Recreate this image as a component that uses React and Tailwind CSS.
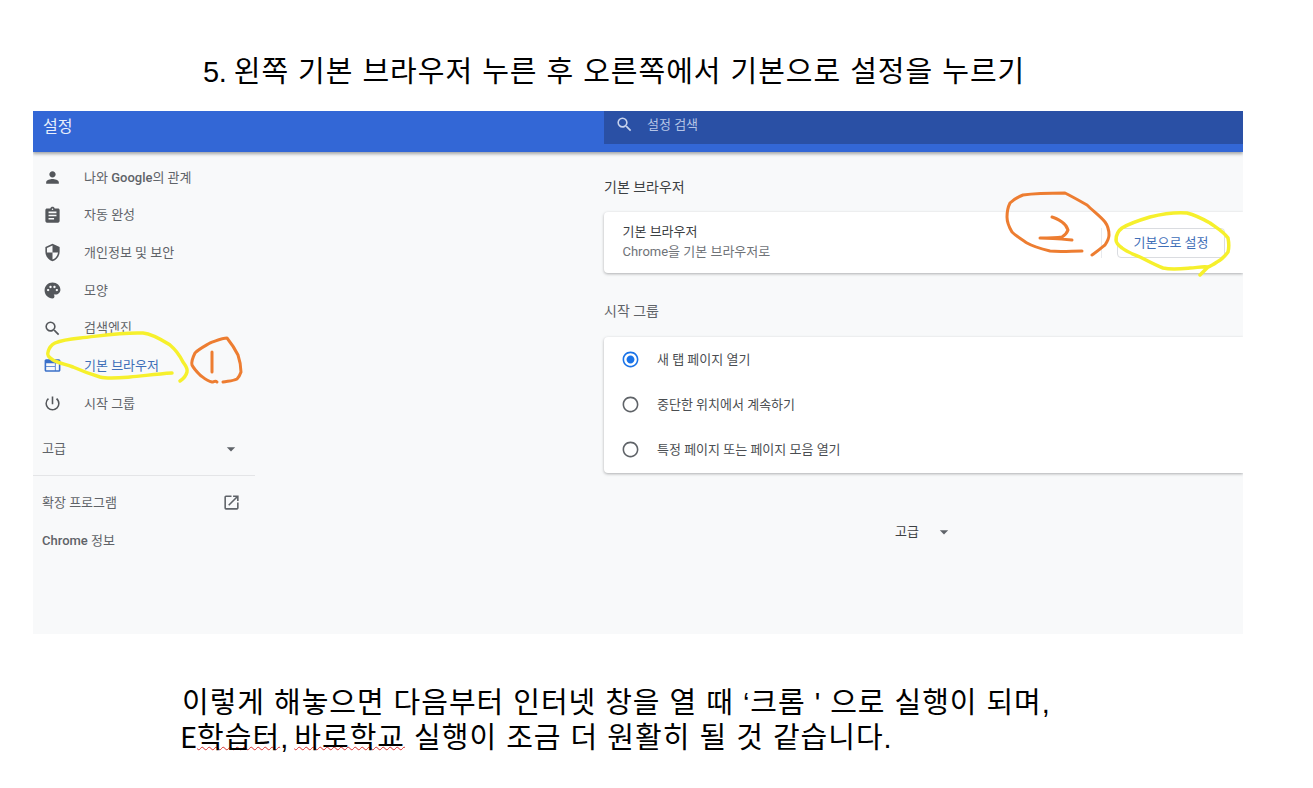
import React from "react";
import { MdPerson, MdAssignment, MdSecurity, MdPalette, MdSearch, MdWeb, MdPowerSettingsNew, MdArrowDropDown, MdOpenInNew, MdRadioButtonChecked, MdRadioButtonUnchecked } from "react-icons/md";

const FONT = "font-['Roboto','Noto_Sans_CJK_KR',sans-serif]";
const DOC = "font-['Liberation_Sans','Noto_Sans_CJK_KR',sans-serif]";

const nav = [
  [MdPerson, <>나와 <span className="font-medium">Google</span>의 관계</>, "a"],
  [MdAssignment, "자동 완성", "b"],
  [MdSecurity, "개인정보 및 보안", "c"],
  [MdPalette, "모양", "d"],
  [MdSearch, "검색엔진", "e"],
  [MdWeb, "기본 브라우저", "f", true],
  [MdPowerSettingsNew, "시작 그룹", "g"],
];

function NavRow({ icon: Icon, label, active }) {
  return (
    <div className="flex h-[37.7px] items-center pl-[10px]">
      <Icon size={19} className={active ? "text-[#3a70c9]" : "text-[#54575b]"} />
      <span className={`ml-[22px] text-[13px] ${active ? "text-[#3f6fb8]" : "text-[#5f6368]"}`}>{label}</span>
    </div>
  );
}

function Radio({ checked, label }) {
  const Icon = checked ? MdRadioButtonChecked : MdRadioButtonUnchecked;
  return (
    <div className="flex h-[45px] items-center pl-[16.5px]">
      <Icon size={19} className={checked ? "text-[#1a73e8]" : "text-[#5f6368]"} />
      <span className="ml-[17.5px] text-[13px] text-[#4a4d51]">{label}</span>
    </div>
  );
}

function Marks() {
  return (
    <svg className="pointer-events-none absolute left-0 top-0" width="1313" height="788">
      <g fill="none" strokeLinecap="round" strokeLinejoin="round" strokeWidth="3.5" stroke="#f6f02c">
        <path d="M172 373C155 374 143 376 130 377C118 378 108 379 100 377C90 374 82 371 73 367C65 364 58 363 53 360C48 357 47 355 48 352C49 348 51 345 55 343C62 340 70 339 80 338C100 336 122 332 143 333C153 334 162 340 170 345C176 350 180 356 183 362C186 366 188 369 187 372C186 376 183 379 180 381" />
        <path d="M1200 275C1203 272 1206 269 1208 267C1202 266 1196 268 1190 268C1180 269 1172 270 1163 268C1155 265 1148 261 1140 257C1133 254 1127 252 1122 248C1118 245 1116 243 1116 240C1116 235 1118 231 1122 228C1130 223 1140 220 1150 217C1162 214 1175 212 1187 213C1195 215 1203 219 1210 223C1217 228 1224 232 1228 238C1229 243 1229 248 1228 252C1225 256 1221 260 1217 262C1214 264 1211 266 1208 267" />
      </g>
      <g fill="none" strokeLinecap="round" strokeLinejoin="round" strokeWidth="3" stroke="#ed7d31">
        <path d="M217 382C215 380 214 382 212 382C207 381 204 378 200 375C197 372 194 369 192 365C191 361 193 357 195 353C199 349 205 346 210 343C216 341 222 338 227 338C231 343 235 349 238 355C240 361 241 367 241 372C240 375 239 377 237 379C233 381 228 381 223 382" />
        <path d="M212 352L212 372" />
        <path d="M1082 251C1072 251 1060 252 1050 251C1042 249 1034 247 1027 243C1021 239 1016 236 1012 232C1009 227 1007 222 1007 217C1007 212 1008 207 1010 203C1014 199 1018 197 1023 195C1037 193 1051 193 1065 193C1073 197 1080 201 1087 205C1093 211 1100 216 1105 222C1108 226 1109 231 1109 235C1109 239 1107 242 1105 245C1101 248 1097 252 1092 255" />
        <path d="M1052 217C1056 218 1059 220 1062 222C1065 224 1067 227 1068 230C1067 233 1065 235 1062 237C1055 238 1047 238 1040 238C1050 238 1061 239 1072 240" />
      </g>
    </svg>
  );
}

const wavy = "underline decoration-[#d9302c] decoration-wavy decoration-1 underline-offset-[-2px]";

export default function App() {
  return (
    <div className={`relative h-[788px] w-[1313px] overflow-hidden bg-white ${DOC}`}>
      <div className="flex h-[111px] items-start pl-[203px] pt-[51px] text-[29px] leading-[42px] tracking-[0.98px] text-black">
        <span><span className="tracking-[-0.5px]">5. </span>왼쪽 기본 브라우저 누른 후 오른쪽에서 기본으로 설정을 누르기</span>
      </div>

      <div className={`ml-[33px] h-[523px] w-[1210px] overflow-hidden bg-[#f8f9fa] ${FONT}`}>
        <header className="flex h-[41px] bg-[#3367d6] shadow-[0_2px_3px_rgba(60,64,67,0.45)]">
          <div className="w-[571px] pl-[10px] pt-[6px] text-[16px] leading-[20px] text-[#e8eefb]">설정</div>
          <div className="flex h-[33px] flex-1 items-center bg-[#2a50a5] pb-[6px] pl-[11px]">
            <MdSearch size={19} className="text-[#c7d3ee]" />
            <span className="ml-[13px] text-[13px] text-[#b5c4e6]">설정 검색</span>
          </div>
        </header>

        <div className="flex">
          <aside className="w-[222px] pt-[6.5px]">
            {nav.map(([icon, label, key, active]) => (
              <NavRow key={key} icon={icon} label={label} active={active} />
            ))}
            <div className="flex h-[53px] items-center justify-between pb-[1px] pl-[9px] pr-[14px] pt-[1px] text-[13px] text-[#5f6368]">
              <span>고급</span>
              <MdArrowDropDown size={20} />
            </div>
            <div className="h-px bg-[#e4e5e7]" />
            <div className="flex h-[53px] items-center justify-between pl-[9px] pr-[14px] text-[13px] text-[#5f6368]">
              <span>확장 프로그램</span>
              <MdOpenInNew size={19} />
            </div>
            <div className="pl-[9px] pt-[2px] text-[13px] text-[#5f6368]"><span className="font-medium">Chrome</span> 정보</div>
          </aside>

          <main className="flex-1 pl-[349px]">
            <h2 className="mt-[26px] text-[14px] font-normal leading-[18px] text-[#3c4043]">기본 브라우저</h2>
            <section className="mt-[16px] flex h-[61px] items-center justify-between rounded-l-[4px] bg-white pl-[18.5px] pr-[18px] shadow-[0_1px_3px_rgba(60,64,67,0.4)]">
              <div className="pb-[2px] text-[13px] leading-[20px]">
                <div className="text-[#3c4043]">기본 브라우저</div>
                <div className="text-[#6f7378]">Chrome을 기본 브라우저로</div>
              </div>
              <div className="flex h-[30px] items-center">
                <div className="mr-[15px] h-[30px] w-px bg-[#e8eaed]" />
                <button className="h-[30px] w-[108px] rounded-[4px] border border-[#dadce0] bg-white text-[13px] text-[#3f6fb8]">기본으로 설정</button>
              </div>
            </section>

            <h2 className="mt-[29px] text-[14px] font-normal leading-[18px] text-[#5f6368]">시작 그룹</h2>
            <section className="mt-[17px] h-[136px] rounded-l-[4px] bg-white shadow-[0_1px_3px_rgba(60,64,67,0.4)]">
              <Radio checked label="새 탭 페이지 열기" />
              <Radio label="중단한 위치에서 계속하기" />
              <Radio label="특정 페이지 또는 페이지 모음 열기" />
            </section>

            <div className="mt-[49px] flex items-center pl-[291px] text-[13px] text-[#3c4043]">
              <span>고급</span>
              <MdArrowDropDown size={20} className="ml-[15px] text-[#5f6368]" />
            </div>
          </main>
        </div>
      </div>

      <div className="pl-[182px] pt-[52px] text-[29px] leading-[34px] text-black">
        <div className="tracking-[0.97px]">이렇게 해놓으면 다음부터 인터넷 창을 열 때 ‘크롬 ' 으로 실행이 되며,</div>
        <div className="-mt-[2px] tracking-[1px]">
          <span className="-ml-[2px] font-['Noto_Sans_CJK_KR',sans-serif] tracking-[0px]">E</span><span className={wavy}>학습터</span><span className="tracking-[-1px]">, </span><span className={wavy}>바로학교</span> 실행이 조금 더 원활히 될 것 같습니다.
        </div>
      </div>

      <Marks />
    </div>
  );
}
